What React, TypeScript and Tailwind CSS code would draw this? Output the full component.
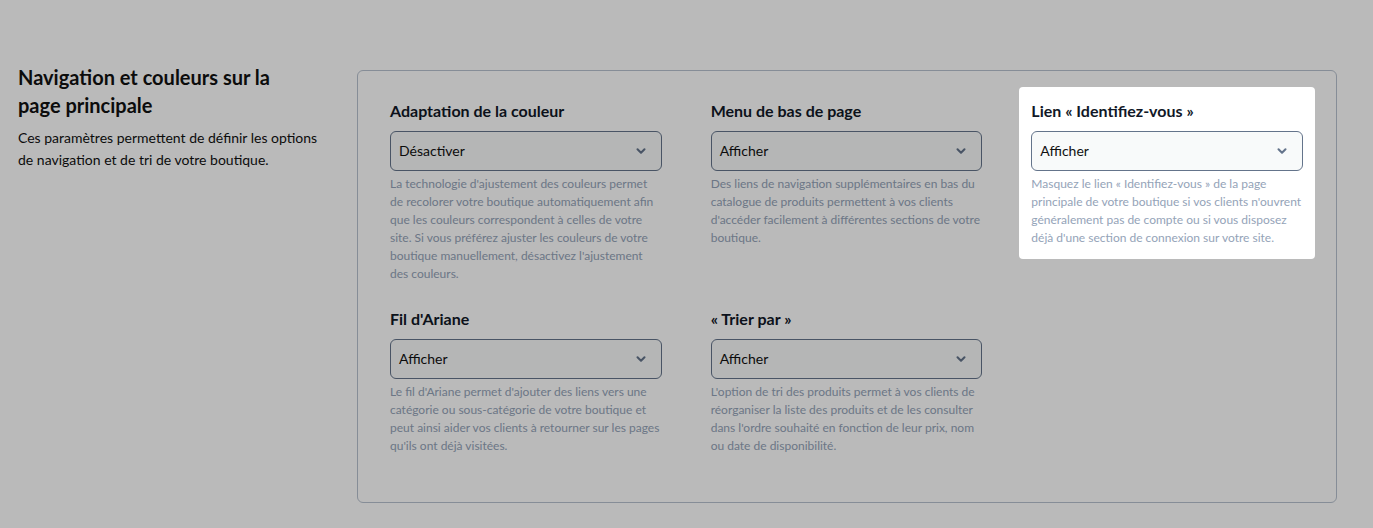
import { ChevronDown } from "lucide-react";

type Field = {
  label: string;
  value: string;
  help: string;
  highlight?: boolean;
};

const fields: Field[] = [
  {
    label: "Adaptation de la couleur",
    value: "Désactiver",
    help: "La technologie d'ajustement des couleurs permet de recolorer votre boutique automatiquement afin que les couleurs correspondent à celles de votre site. Si vous préférez ajuster les couleurs de votre boutique manuellement, désactivez l'ajustement des couleurs.",
  },
  {
    label: "Menu de bas de page",
    value: "Afficher",
    help: "Des liens de navigation supplémentaires en bas du catalogue de produits permettent à vos clients d'accéder facilement à différentes sections de votre boutique.",
  },
  {
    label: "Lien « Identifiez-vous »",
    value: "Afficher",
    help: "Masquez le lien « Identifiez-vous » de la page principale de votre boutique si vos clients n'ouvrent généralement pas de compte ou si vous disposez déjà d'une section de connexion sur votre site.",
    highlight: true,
  },
  {
    label: "Fil d'Ariane",
    value: "Afficher",
    help: "Le fil d'Ariane permet d'ajouter des liens vers une catégorie ou sous-catégorie de votre boutique et peut ainsi aider vos clients à retourner sur les pages qu'ils ont déjà visitées.",
  },
  {
    label: "« Trier par »",
    value: "Afficher",
    help: "L'option de tri des produits permet à vos clients de réorganiser la liste des produits et de les consulter dans l'ordre souhaité en fonction de leur prix, nom ou date de disponibilité.",
  },
];

function SettingField({ field }: { field: Field }) {
  // the highlighted field is the tour spotlight: its shadow dims the rest of the page
  const wrap = field.highlight
    ? "relative z-10 -m-3 p-3 rounded-sm bg-white shadow-[0_0_0_9999px_rgba(0,0,0,0.27)]"
    : "";
  return (
    <div className={wrap}>
      <h3 className="text-base font-bold leading-6 text-[#111827]">{field.label}</h3>
      <div className="mt-2 flex h-10 items-center justify-between rounded-md border border-[#64748b] bg-[#f8fafa] pl-2 pr-[13px] text-sm text-[#111]">
        <span>{field.value}</span>
        <ChevronDown className="h-3.5 w-3.5 text-[#64748b]" strokeWidth={3.5} />
      </div>
      <p className="mt-1 text-xs leading-[18px] text-[#94a3b8]">{field.help}</p>
    </div>
  );
}

export default function App() {
  return (
    <div
      className="min-h-screen bg-white"
      style={{ fontFamily: 'Lato, "Noto Sans", sans-serif' }}
    >
      <div className="flex items-start gap-6 pt-[63px] pl-[18px] pr-[36px]">
        <aside className="w-[315px] shrink-0">
          <h2 className="max-w-[285px] text-xl font-bold leading-7 text-[#111]">
            Navigation et couleurs sur la page principale
          </h2>
          <p className="mt-2 text-sm leading-[22px] text-[#111]">
            Ces paramètres permettent de définir les options de navigation et de tri de votre boutique.
          </p>
        </aside>

        <section className="mt-[7px] flex-1 rounded-md border border-[#b8c2cf] bg-white pt-7 pb-[47px] pl-[32px] pr-[33px]">
          <div className="grid grid-cols-3 items-start gap-x-[49px] gap-y-6">
            {fields.map((f) => (
              <SettingField key={f.label} field={f} />
            ))}
          </div>
        </section>
      </div>
    </div>
  );
}
